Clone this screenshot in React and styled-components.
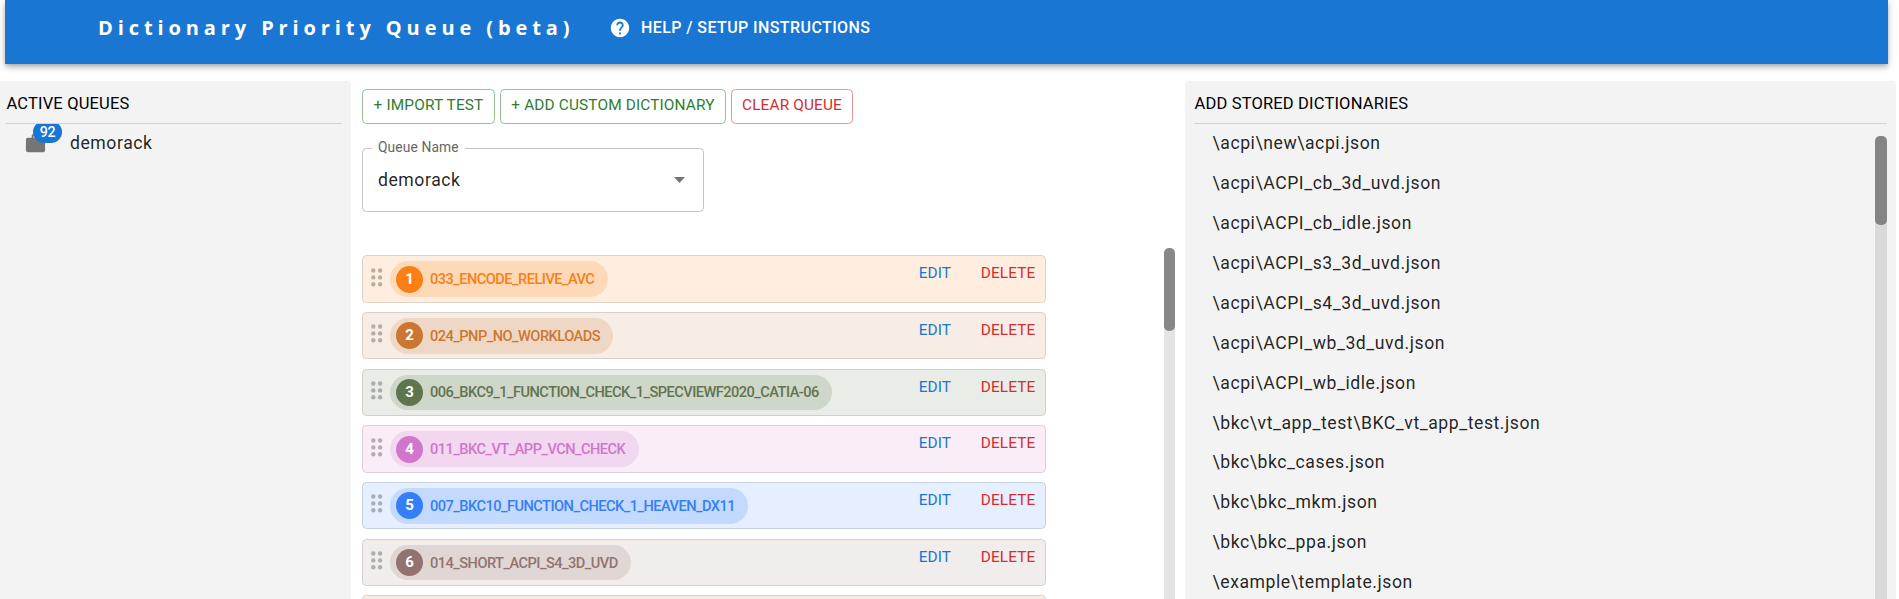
import React from "react";
import styled, { createGlobalStyle } from "styled-components";

const Global = createGlobalStyle`
  * { box-sizing: border-box; }
  html, body { margin: 0; height: 100%; overflow: hidden; background: #fff; }
  body { font-family: Roboto, "Liberation Sans", sans-serif; font-size: 17.6px; color: rgba(0, 0, 0, 0.87); letter-spacing: 0.56px; }
`;

const Page = styled.div`
  height: 599px;
  display: flex;
  flex-direction: column;
  overflow: hidden;
`;

const AppBar = styled.header`
  flex: none;
  display: flex;
  align-items: center;
  height: 64px;
  margin: 0 11px 0 5px;
  padding: 0 0 9px 93px;
  background: #1976d2;
  color: #fff;
  box-shadow: 0 2px 4px -1px rgba(0, 0, 0, 0.2), 0 4px 5px rgba(0, 0, 0, 0.14), 0 1px 11px rgba(0, 0, 0, 0.12);
`;

const Title = styled.h1`
  margin: 0;
  width: 511px;
  font: 700 20px/32px "Open Sans", sans-serif;
  letter-spacing: 4.9px;
  white-space: nowrap;
`;

const HelpButton = styled.a`
  display: flex;
  align-items: center;
  gap: 10px;
  font-size: 16px;
  font-weight: 500;
  letter-spacing: 0.41px;
  white-space: nowrap;
  svg { width: 22px; height: 22px; fill: currentColor; }
`;

const Columns = styled.main`
  flex: 1;
  min-height: 0;
  display: flex;
  padding: 17px 3px 0 0;
`;

const Panel = styled.section`
  display: flex;
  flex-direction: column;
  width: ${(p) => p.$width}px;
  padding: ${(p) => p.$pad};
  background: #f3f3f3;
  border-radius: ${(p) => p.$radius};
`;

const PanelTitle = styled.h2`
  flex: none;
  margin: 0;
  height: 43px;
  padding: 7px 0 0 0.5px;
  border-bottom: 1px solid #d2d2d2;
  font-size: 16.5px;
  font-weight: 400;
  line-height: 32px;
  letter-spacing: 0.17px;
  color: #000;
  white-space: nowrap;
`;

const QueueItem = styled.div`
  display: flex;
  align-items: center;
  gap: 23px;
  height: 38px;
  overflow: hidden;
  padding-left: 18px;
`;

const BadgeHolder = styled.span`
  position: relative;
  display: flex;
  svg { width: 23px; height: 23px; fill: #757575; }
`;

const Badge = styled.span`
  position: absolute;
  left: 9px;
  top: -11px;
  min-width: 29px;
  height: 22px;
  border-radius: 11px;
  background: #1976d2;
  color: #fff;
  font-size: 14.2px;
  font-weight: 500;
  line-height: 23px;
  letter-spacing: -0.3px;
  text-align: center;
`;

const Center = styled.section`
  width: 834px;
  padding: 8px 10px 0 11px;
  display: flex;
  flex-direction: column;
`;

const Actions = styled.div`
  display: flex;
  gap: 5px;
`;

const OutlineButton = styled.button`
  width: ${(p) => p.$width}px;
  height: 35px;
  padding: 0 0 3px;
  border: 1px solid ${(p) => (p.$danger ? "#ea9696" : "#96bf98")};
  border-radius: 4.4px;
  background: #fff;
  color: ${(p) => (p.$danger ? "#d32f2f" : "#2e7d32")};
  font: 400 15.4px/27px Roboto, sans-serif;
  letter-spacing: 0.14px;
  white-space: nowrap;
`;

const Field = styled.fieldset`
  margin: 16px 0 0;
  width: 342px;
  height: 72px;
  padding: 0 18px 0 15px;
  border: 1px solid #c4c4c4;
  border-radius: 4.4px;
  min-width: 0;
`;

const FieldLabel = styled.legend`
  margin-left: -6px;
  padding: 0 6px;
  font-size: 13.8px;
  line-height: 15px;
  height: 16px;
  letter-spacing: 0.12px;
  color: #666;
`;

const FieldValue = styled.div`
  display: flex;
  align-items: center;
  justify-content: space-between;
  height: 48px;
  letter-spacing: 0.56px;
`;

const Caret = styled.span`
  width: 11px;
  height: 6px;
  background: #757575;
  clip-path: polygon(0 0, 100% 0, 50% 100%);
`;

const QueueScroll = styled.div`
  flex: 1;
  min-height: 0;
  margin-top: 36px;
  display: flex;
  justify-content: space-between;
`;

const QueueRows = styled.div`
  width: 684px;
  padding-top: 7.2px;
  overflow: hidden;
`;

const Track = styled.div`
  width: ${(p) => p.$width}px;
  background: ${(p) => p.$track};
  border-radius: 6px 6px 0 0;
`;

const Thumb = styled.div`
  height: ${(p) => p.$height}px;
  border-radius: 5px;
  background: ${(p) => p.$color};
`;

const Row = styled.div`
  display: flex;
  height: 47.5px;
  margin-bottom: 9.2px;
  padding: 5px 9.5px 0 8px;
  border: 1px solid ${(p) => p.$line};
  border-radius: 4.4px;
  background: ${(p) => p.$bg};
`;

const Handle = styled.svg`
  width: 12px;
  height: 19px;
  margin-top: 6.5px;
  fill: rgba(0, 0, 0, 0.27);
`;

const Chip = styled.span`
  display: flex;
  align-items: center;
  height: 35.8px;
  margin-left: 7px;
  padding: 0 13.4px 0 6px;
  gap: 7px;
  border-radius: 18px;
  background: ${(p) => p.$bg};
  color: ${(p) => p.$color};
  font-size: 14.6px;
  font-weight: 500;
  letter-spacing: -0.53px;
  white-space: nowrap;
`;

const Rank = styled.span`
  width: 27px;
  height: 27px;
  border-radius: 50%;
  background: ${(p) => p.$color};
  color: #fff;
  font-size: 15px;
  font-weight: 700;
  line-height: 26px;
  letter-spacing: 0;
  text-align: center;
`;

const RowActions = styled.span`
  margin-left: auto;
  display: flex;
  gap: 29.5px;
  font-size: 15.4px;
  line-height: 24.3px;
  letter-spacing: 0.14px;
`;

const TextAction = styled.a`
  color: ${(p) => (p.$danger ? "#d32f2f" : "#1976d2")};
`;

const StoredList = styled.div`
  flex: 1;
  min-height: 0;
  display: flex;
  justify-content: space-between;
  overflow: hidden;
`;

const StoredItems = styled.ul`
  margin: 0;
  padding: 0.3px 0 0 18.5px;
  list-style: none;
`;

const StoredItem = styled.li`
  height: 39.9px;
  line-height: 39.9px;
  white-space: nowrap;
`;

const ScrollSlot = styled.div`
  display: flex;
  padding-top: 12px;
`;

const queue = [
  ["033_ENCODE_RELIVE_AVC", "#f97f16", "#ffeee0", "#fdd9b8", "#dfd2c6"],
  ["024_PNP_NO_WORKLOADS", "#cb7733", "#f8ede4", "#efd7c5", "#dacfc7"],
  ["006_BKC9_1_FUNCTION_CHECK_1_SPECVIEWF2020_CATIA-06", "#5f754e", "#eaede7", "#cfd6ca", "#cdd0cb"],
  ["011_BKC_VT_APP_VCN_CHECK", "#d076cb", "#f9edf7", "#f1d7ef", "#dacfd9"],
  ["007_BKC10_FUNCTION_CHECK_1_HEAVEN_DX11", "#347ff9", "#e5efff", "#c3d9fd", "#c6d2e2"],
  ["014_SHORT_ACPI_S4_3D_UVD", "#927370", "#f1edec", "#e0d6d4", "#d2cfce"],
];

const stored = [
  "\\acpi\\new\\acpi.json",
  "\\acpi\\ACPI_cb_3d_uvd.json",
  "\\acpi\\ACPI_cb_idle.json",
  "\\acpi\\ACPI_s3_3d_uvd.json",
  "\\acpi\\ACPI_s4_3d_uvd.json",
  "\\acpi\\ACPI_wb_3d_uvd.json",
  "\\acpi\\ACPI_wb_idle.json",
  "\\bkc\\vt_app_test\\BKC_vt_app_test.json",
  "\\bkc\\bkc_cases.json",
  "\\bkc\\bkc_mkm.json",
  "\\bkc\\bkc_ppa.json",
  "\\example\\template.json",
];

function DragHandle() {
  return (
    <Handle viewBox="0 0 12 19">
      {[2.3, 9.1].map((x) => [2.5, 9.4, 16.3].map((y) => <circle key={`${x}-${y}`} cx={x} cy={y} r="2.2" />))}
    </Handle>
  );
}

export default function App() {
  return (
    <Page>
      <Global />
      <AppBar>
        <Title>Dictionary Priority Queue (beta)</Title>
        <HelpButton>
          <svg viewBox="0 0 24 24">
            <path d="M12 2C6.48 2 2 6.48 2 12s4.48 10 10 10 10-4.48 10-10S17.52 2 12 2zm1 17h-2v-2h2v2zm2.07-7.75-.9.92C13.45 12.9 13 13.5 13 15h-2v-.5c0-1.1.45-2.1 1.17-2.83l1.24-1.26c.37-.36.59-.86.59-1.41 0-1.1-.9-2-2-2s-2 .9-2 2H8c0-2.21 1.79-4 4-4s4 1.79 4 4c0 .88-.36 1.68-.93 2.25z" />
          </svg>
          HELP / SETUP INSTRUCTIONS
        </HelpButton>
      </AppBar>
      <Columns>
        <Panel $width={351} $pad="0 9px 0 6px" $radius="0 4px 0 0">
          <PanelTitle>ACTIVE QUEUES</PanelTitle>
          <QueueItem>
            <BadgeHolder>
              <svg viewBox="0 0 24 24">
                <path d="M20 6h-4V4c0-1.11-.89-2-2-2h-4c-1.11 0-2 .89-2 2v2H4c-1.11 0-1.99.89-1.99 2L2 19c0 1.11.89 2 2 2h16c1.11 0 2-.89 2-2V8c0-1.11-.89-2-2-2zm-6 0h-4V4h4v2z" />
              </svg>
              <Badge>92</Badge>
            </BadgeHolder>
            <span>demorack</span>
          </QueueItem>
        </Panel>
        <Center>
          <Actions>
            <OutlineButton $width={133}>+ IMPORT TEST</OutlineButton>
            <OutlineButton $width={226}>+ ADD CUSTOM DICTIONARY</OutlineButton>
            <OutlineButton $width={122} $danger>CLEAR QUEUE</OutlineButton>
          </Actions>
          <Field>
            <FieldLabel>Queue Name</FieldLabel>
            <FieldValue>
              demorack
              <Caret />
            </FieldValue>
          </Field>
          <QueueScroll>
            <QueueRows>
              {queue.map(([name, color, bg, chip, line], i) => (
                <Row key={name} $bg={bg} $line={line}>
                  <DragHandle />
                  <Chip $bg={chip} $color={color}>
                    <Rank $color={color}>{i + 1}</Rank>
                    {name}
                  </Chip>
                  <RowActions>
                    <TextAction>EDIT</TextAction>
                    <TextAction $danger>DELETE</TextAction>
                  </RowActions>
                </Row>
              ))}
              <Row $bg="#f8ede0" $line="#d8cec2" />
            </QueueRows>
            <Track $width={11} $track="#e4e4e4">
              <Thumb $height={83} $color="#888" />
            </Track>
          </QueueScroll>
        </Center>
        <Panel $width={711} $pad="0 9px 0" $radius="4px 4px 0 0">
          <PanelTitle>ADD STORED DICTIONARIES</PanelTitle>
          <StoredList>
            <StoredItems>
              {stored.map((s) => (
                <StoredItem key={s}>{s}</StoredItem>
              ))}
            </StoredItems>
            <ScrollSlot>
              <Track $width={12} $track="#dadada">
                <Thumb $height={89} $color="#848484" />
              </Track>
            </ScrollSlot>
          </StoredList>
        </Panel>
      </Columns>
    </Page>
  );
}
